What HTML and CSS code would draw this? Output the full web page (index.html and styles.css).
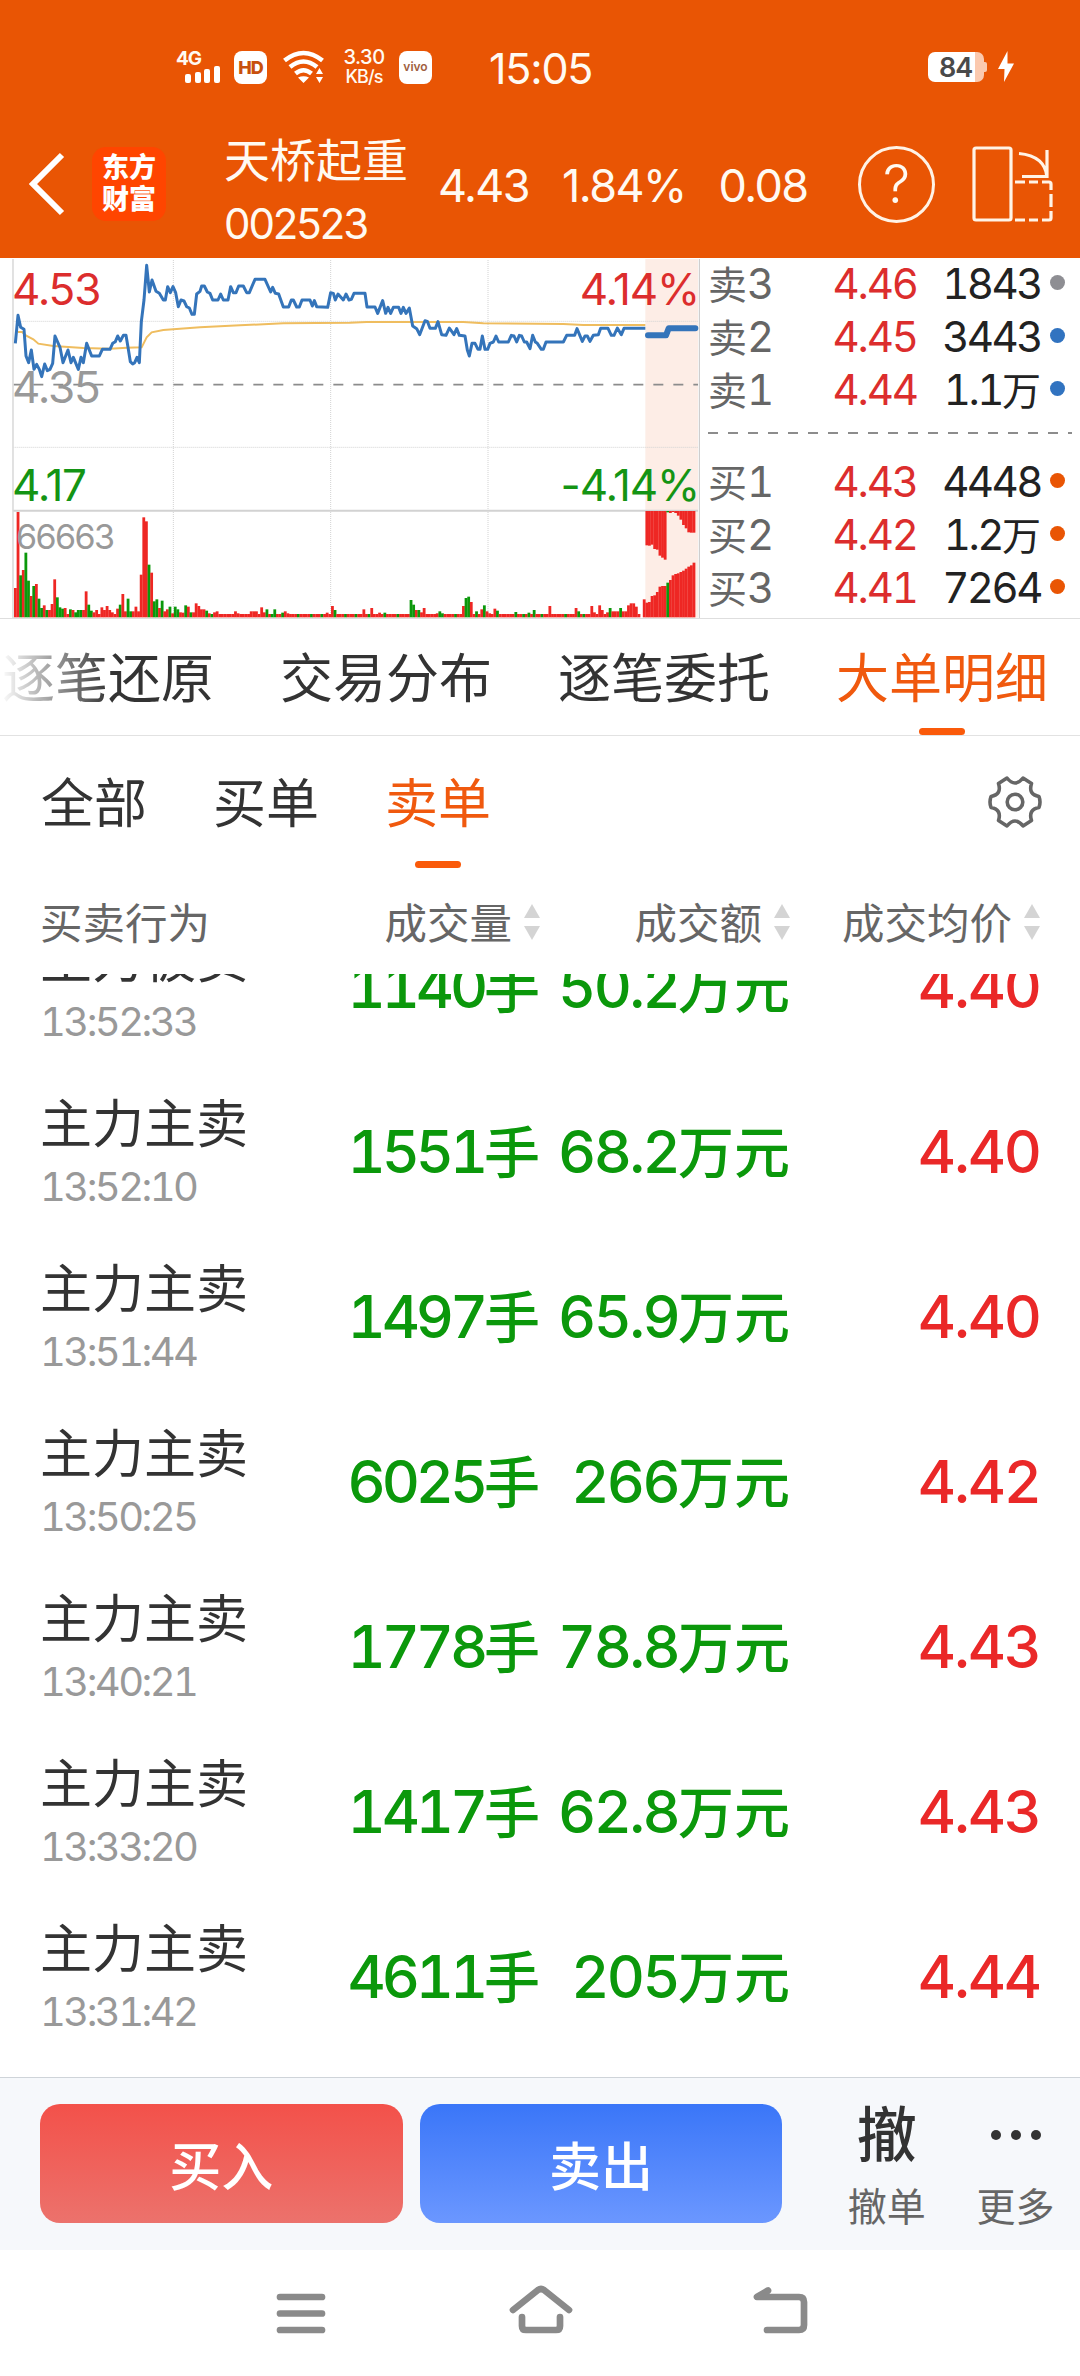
FILE: index.html
```html
<!DOCTYPE html>
<html lang="zh-CN">
<head>
	<meta charset="utf-8">
	<title>天桥起重 002523</title>
	<link rel="stylesheet" href="styles.css">
</head>
<body>
	<div class="top">
		<div class="status">
			<div class="signal">
				<b>4G</b>
				<svg width="36" height="17" fill="#fff"><rect x="0" y="8" width="6" height="9" rx="2"/><rect x="10" y="6" width="6" height="11" rx="2"/><rect x="19" y="3" width="6" height="14" rx="2"/><rect x="29" y="0" width="6" height="17" rx="2"/></svg>
			</div>
			<div class="badge hd">HD</div>
			<svg class="wifi" width="42" height="34" viewBox="0 0 42 34" fill="none" stroke="#fff" stroke-width="4.6">
				<path d="M1.5 10.5Q20.5 -4.500 39.500 10.500M7 17Q20.500 6 34 17M12.500 23.500Q20.500 17 28.500 23.500"/>
				<path d="M15 27.500Q20.500 25 26 27.500L20.500 33ZM33 24l3.500-6 3.500 6zM33 27l3.500 6 3.500-6z" fill="#fff" stroke="none"/>
			</svg>
			<div class="speed"><span>3.30</span><span>KB/s</span></div>
			<div class="badge vivo">vivo</div>
			<div class="clock">15:05</div>
			<div class="battery"><span>84</span></div>
			<svg class="bolt" width="16" height="32" viewBox="0 0 16 32"><path d="M9.500 0L0 18h6.500L6 31 16 12.500H9.500z" fill="#fff"/></svg>
		</div>
		<div class="appbar">
			<svg class="back" width="36" height="64" viewBox="0 0 36 64" fill="none" stroke="#fff" stroke-width="6"><path d="M33 3L4 32l29 29"/></svg>
			<div class="logo"><span>东方</span><span>财富</span></div>
			<div class="stock"><div class="stock-name">天桥起重</div><div class="stock-code">002523</div></div>
			<div class="quote"><span>4.43</span><span>1.84%</span><span>0.08</span></div>
			<div class="help">?</div>
			<svg class="rotate" width="82" height="76" viewBox="0 0 82 76" fill="none" stroke="#fff3e6" stroke-width="3.200">
				<rect x="2" y="2" width="37" height="72" rx="2"/>
				<path d="M47 7.500Q73 10 75 31M75 4v26.500H50"/>
				<path d="M43 36h10M57 36h9M70 36h7q2 0 2 2v6M79 48v13M79 65v7q0 2-2 2h-7M66 74h-9M53 74H43"/>
			</svg>
		</div>
	</div>

	<div class="market">
		<div class="chart">
			<!-- 3 units per pixel -->
			<svg width="700" height="360" viewBox="0 24 2100 1080">
				<rect x="1936" y="27" width="158" height="1076" fill="#fdede6"/>
				<g stroke="#d2d2d2" stroke-width="3" stroke-dasharray="3 3">
					<path d="M520 30V1102M992 30V1102M1464 30V1102M40 214H2094M40 592H2094"/>
				</g>
				<path d="M40 404H2094" stroke="#8c8c8c" stroke-width="5" stroke-dasharray="30 30"/>
				<path d="M39 27V1104" stroke="#dcdcdc" stroke-width="5"/>
				<path d="M2098 27V1104" stroke="#c4c4c4" stroke-width="3"/>
				<path d="M40 782H2094" stroke="#d2d2d2" stroke-width="6"/>
				<g id="bars"></g>
				<polyline fill="none" stroke="#efbd5f" stroke-width="6" points="54,246 66,246 80,258 100,268 115,281 160,288 250,294 330,296 380,293 425,292 440,262 455,247 490,240 600,232 720,226 850,220 1050,218 1100,216 1390,216 1450,220 1690,222 1750,225 1936,225"/>
				<polyline fill="none" stroke="#3474ba" stroke-width="9" stroke-linejoin="round" points="46,280 54,196 62,232 72,238 78,318 86,338 94,300 102,358 110,343 118,358 125,380 134,342 142,362 150,358 158,340 165,258 180,292 189,338 204,300 213,338 220,322 235,358 243,322 250,338 260,280 275,318 298,318 307,298 330,298 338,280 346,275 353,258 361,273 370,256 378,256 385,298 391,335 398,342 404,338 411,322 418,338 424,215 432,150 440,46 448,126 456,90 468,124 478,130 490,150 496,150 503,110 511,128 519,110 527,128 535,170 543,150 552,153 560,170 568,174 576,193 583,193 590,132 600,124 605,108 613,108 622,126 630,130 638,150 654,150 662,132 670,150 684,150 692,110 700,128 708,128 716,108 730,108 740,128 748,128 765,88 795,88 812,126 818,112 826,130 836,132 850,171 866,171 874,150 880,150 890,171 898,171 906,150 930,150 937,168 943,152 950,170 983,172 992,128 1000,130 1006,150 1014,132 1030,150 1038,132 1047,150 1054,148 1062,130 1095,130 1101,171 1125,171 1133,190 1148,152 1157,190 1164,172 1172,190 1180,172 1196,172 1203,190 1210,172 1218,190 1228,174 1238,228 1250,236 1259,254 1275,212 1282,214 1290,235 1306,235 1314,215 1325,254 1338,256 1348,234 1362,254 1370,236 1378,256 1395,258 1402,300 1408,318 1416,280 1425,280 1434,298 1440,298 1447,258 1455,298 1463,298 1470,280 1480,276 1488,258 1496,276 1525,276 1534,256 1542,258 1550,276 1558,256 1565,258 1573,276 1580,276 1590,296 1598,256 1606,276 1612,280 1624,298 1630,298 1638,276 1690,276 1700,256 1724,256 1731,236 1747,274 1755,258 1762,258 1770,274 1780,256 1795,254 1802,235 1824,235 1834,256 1842,256 1852,234 1864,254 1872,235 1936,235"/>
				<polyline fill="none" stroke="#3474ba" stroke-width="18" stroke-linecap="round" stroke-linejoin="round" points="1944,256 1998,256 2006,235 2086,235"/>
			</svg>
			<span class="label up high">4.53</span>
			<span class="label up high right">4.14%</span>
			<span class="label mid">4.35</span>
			<span class="label down low">4.17</span>
			<span class="label down low right">-4.14%</span>
			<span class="label vol">66663</span>
		</div>
		<div class="book">
			<div class="level"><span>卖<i>3</i></span><b>4.46</b><em>1843</em><u class="grey"></u></div>
			<div class="level"><span>卖<i>2</i></span><b>4.45</b><em>3443</em><u class="blue"></u></div>
			<div class="level"><span>卖<i>1</i></span><b>4.44</b><em>1.1<small>万</small></em><u class="blue"></u></div>
			<svg class="split" width="364" height="39"><path d="M0 17H364" stroke="#8c8c8c" stroke-width="2" stroke-dasharray="10 10"/></svg>
			<div class="level"><span>买<i>1</i></span><b>4.43</b><em>4448</em><u></u></div>
			<div class="level"><span>买<i>2</i></span><b>4.42</b><em>1.2<small>万</small></em><u></u></div>
			<div class="level"><span>买<i>3</i></span><b>4.41</b><em>7264</em><u></u></div>
		</div>
	</div>

	<div class="tabs">
		<a>逐笔还原</a><a>交易分布</a><a>逐笔委托</a><a class="active">大单明细</a>
	</div>
	<div class="filters">
		<a>全部</a><a>买单</a><a class="active">卖单</a>
		<svg class="gear" width="56" height="54" viewBox="-28 -27 56 54" fill="none" stroke="#666" stroke-width="3.600" stroke-linejoin="round">
			<path d="M-8 -24Q0 -14 8 -24L16.500 -18.500Q13 -7.500 24 -5.500Q26 0 24 5.500Q13 7.500 16.500 18.500L8 24Q0 14 -8 24L-16.500 18.500Q-13 7.500 -24 5.500Q-26 0 -24 -5.500Q-13 -7.500 -16.500 -18.500Z"/>
			<circle r="7.800"/>
		</svg>
	</div>
	<div class="grid thead">
		<span>买卖行为</span>
		<span>成交量<i class="sort"></i></span>
		<span>成交额<i class="sort"></i></span>
		<span>成交均价<i class="sort"></i></span>
	</div>
	<div class="list">
		<div class="grid row"><div><p>主力被卖</p><time>13:52:33</time></div><span class="lots">1140<small>手</small></span><span>50.2<small>万元</small></span><b>4.40</b></div>
		<div class="grid row"><div><p>主力主卖</p><time>13:52:10</time></div><span class="lots">1551<small>手</small></span><span>68.2<small>万元</small></span><b>4.40</b></div>
		<div class="grid row"><div><p>主力主卖</p><time>13:51:44</time></div><span class="lots">1497<small>手</small></span><span>65.9<small>万元</small></span><b>4.40</b></div>
		<div class="grid row"><div><p>主力主卖</p><time>13:50:25</time></div><span class="lots">6025<small>手</small></span><span>266<small>万元</small></span><b>4.42</b></div>
		<div class="grid row"><div><p>主力主卖</p><time>13:40:21</time></div><span class="lots">1778<small>手</small></span><span>78.8<small>万元</small></span><b>4.43</b></div>
		<div class="grid row"><div><p>主力主卖</p><time>13:33:20</time></div><span class="lots">1417<small>手</small></span><span>62.8<small>万元</small></span><b>4.43</b></div>
		<div class="grid row"><div><p>主力主卖</p><time>13:31:42</time></div><span class="lots">4611<small>手</small></span><span>205<small>万元</small></span><b>4.44</b></div>
	</div>

	<div class="trade">
		<button class="buy">买入</button>
		<button class="sell">卖出</button>
		<div class="action"><strong>撤</strong><span>撤单</span></div>
		<div class="action">
			<svg width="60" height="64" fill="#333"><circle cx="10" cy="32" r="5"/><circle cx="30" cy="32" r="5"/><circle cx="50" cy="32" r="5"/></svg>
			<span>更多</span>
		</div>
	</div>
	<div class="nav">
		<svg width="60" height="60" viewBox="0 0 60 60"><path d="M9 14H51M9 30.500H51M9 47H51"/></svg>
		<svg width="70" height="60" viewBox="0 0 70 60"><path d="M7 27L32 7Q35 5 38 7L63 27M16 34V43Q16 47 20 47H50Q54 47 54 43V34"/></svg>
		<svg width="60" height="60" viewBox="0 0 60 60"><path d="M17 7.500L6 14H48Q53 14 53 19V42Q53 47 48 47H16"/></svg>
	</div>

	<script>
		// volume per minute, negative = falling (green)
		var vol = [88,316,-126,142,-194,-110,64,-94,100,-56,-28,36,-22,22,40,114,-60,-30,-26,28,10,-24,22,-15,-22,-22,22,78,-38,-20,15,22,10,30,22,34,22,15,10,26,-38,70,18,-56,-18,18,32,18,128,300,288,-158,134,-48,-54,28,-50,18,24,-32,12,-32,-24,15,14,-36,32,-15,15,42,34,24,24,-20,12,-10,15,18];
		// the rest of the day is flat apart from these minutes
		var peaks = {84:18,85:12,90:18,91:18,92:18,94:30,95:15,96:-24,98:-10,99:-24,102:-14,103:18,104:12,108:-10,113:-10,117:-10,119:14,121:34,122:-22,126:-10,130:-10,133:24,135:-10,136:28,139:14,141:-14,146:-10,151:-52,152:-38,153:22,154:-22,155:15,156:28,161:12,162:-18,163:-12,168:-10,171:34,172:-58,173:-62,174:46,176:-18,178:24,179:-36,180:18,181:12,183:26,184:-20,191:-16,194:-10,196:-14,198:-22,201:-10,204:34,210:-10,214:28,215:-18,217:-10,220:34,221:15,223:36,224:22,226:15,227:-28,228:18,229:18,230:18,231:-28,232:18,233:18,234:36,235:42,236:42,237:32,
			240:54,241:44,242:46,243:64,244:66,245:76,246:92,247:94,248:94,249:-104,250:112,251:126,252:130,253:132,254:136,255:140,256:146,257:152,258:156,259:164};
		var queue = [103,104,101,114,116,134,140,146,-4,6,3,6,14,26,42,52,64,65,65];
		var out = "";

		function bar(i, v, top) {
			var h = Math.abs(v);
			var y = top ? 783 : 1102 - h;
			out += '<rect x="' + (42 + i * 7.86).toFixed(1) + '" y="' + y + '" width="8.4" height="' + h + '" fill="' + (v < 0 ? "#0b980b" : "#ee2724") + '"/>';
		}
		for (var i = 0; i < 260; i++) {
			if (i == 239) continue;
			bar(i, vol[i] || peaks[i] || 10);
		}
		for (var j = 0; j < queue.length; j++) {
			bar(241 + j, queue[j], true);
		}
		document.getElementById("bars").innerHTML = out;
	</script>
</body>
</html>
```
FILE: styles.css
```css
* {
	box-sizing: border-box;
}
body {
	margin: 0;
	width: 1080px;
	height: 2376px;
	overflow: hidden;
	display: flex;
	flex-direction: column;
	background: #fff;
	color: #333;
	font-family: Inter, "Noto Sans CJK SC", sans-serif;
	line-height: 1;
}
i, em, u {
	font-style: normal;
	text-decoration: none;
}

/* status bar and title */
.top {
	height: 258px;
	background: #e95504;
	color: #fffaf2;
}
.status {
	height: 110px;
	padding: 24px 0 0 176px;
	display: flex;
	align-items: center;
}
.signal {
	width: 58px;
	height: 32px;
	display: flex;
	flex-direction: column;
}
.signal b {
	font-size: 19px;
	line-height: 15px;
	letter-spacing: -1px;
}
.signal svg {
	margin-left: 9px;
}
.badge {
	width: 33px;
	height: 33px;
	border-radius: 8px;
	background: #fff;
	color: #c8500c;
	text-align: center;
	line-height: 33px;
	font-weight: 800;
}
.hd {
	font-size: 18px;
	letter-spacing: -1px;
	margin-right: 16px;
}
.speed {
	width: 44px;
	margin: 0 13px 0 17px;
	display: flex;
	flex-direction: column;
	align-items: center;
	font-size: 20px;
	line-height: 20px;
	font-weight: 500;
	letter-spacing: -0.5px;
}
.speed span + span {
	font-size: 18px;
	letter-spacing: -0.9px;
}
.vivo {
	font-size: 12px;
	font-weight: 600;
	line-height: 31px;
	color: #a06040;
}
.clock {
	width: 120px;
	margin: 2px 0 0 57px;
	font-size: 43px;
	letter-spacing: -1.2px;
}
.battery {
	position: relative;
	width: 56px;
	height: 30px;
	margin: 0 14px 0 319px;
	border-radius: 7px;
	background: linear-gradient(90deg, #fff 47px, #fbc9ae 47px);
	color: #4a4a4a;
	font-size: 27px;
	line-height: 31px;
	font-weight: 600;
	letter-spacing: -1px;
	padding-left: 11px;
}
.battery::after {
	content: "";
	position: absolute;
	right: -3px;
	top: 10px;
	width: 3px;
	height: 10px;
	border-radius: 0 2px 2px 0;
	background: #fbc9ae;
}
.appbar {
	height: 148px;
	padding-left: 29px;
	display: flex;
	align-items: center;
}
.logo {
	width: 74px;
	height: 74px;
	margin-left: 27px;
	border-radius: 14px;
	background: #ff4500;
	color: #fff;
	display: flex;
	flex-direction: column;
	align-items: center;
	justify-content: center;
	font-size: 27px;
	line-height: 32px;
	font-weight: 900;
}
.stock {
	width: 214px;
	margin-left: 58px;
	padding-top: 16px;
}
.stock-name {
	font-size: 46px;
	line-height: 64px;
}
.stock-code {
	font-size: 42px;
	line-height: 64px;
	letter-spacing: -0.05em;
}
.quote {
	display: flex;
	width: 420px;
	gap: 33px;
	padding-top: 3px;
	font-size: 45px;
	letter-spacing: -0.035em;
}
.help {
	width: 77px;
	height: 77px;
	border: 3.5px solid #fff3e6;
	border-radius: 50%;
	text-align: center;
	font-size: 54px;
	line-height: 70px;
	font-weight: 300;
}
.rotate {
	margin-left: 37px;
}

/* chart and order book */
.market {
	display: flex;
	height: 361px;
	border-bottom: 1px solid #dedede;
}
.chart {
	position: relative;
	width: 708px;
	height: 360px;
}
.chart svg {
	display: block;
}
.label {
	position: absolute;
	left: 12px;
	font-size: 44px;
	letter-spacing: -1.2px;
}
.right {
	left: auto;
	right: 9px;
}
.high {
	top: 9px;
}
.mid {
	top: 107px;
	color: #999;
}
.low {
	top: 205px;
}
.up {
	color: #dc2d2d;
}
.down {
	color: #149414;
}
.vol {
	top: 262px;
	left: 16px;
	font-size: 34px;
	letter-spacing: -1.6px;
	color: #999;
}
.book {
	margin-top: -1px;
}
.level {
	display: flex;
	align-items: center;
	height: 53px;
	font-size: 42px;
	letter-spacing: -0.05em;
	font-variant-numeric: tabular-nums;
}
.level span {
	width: 80px;
	color: #666;
	font-size: 39px;
	letter-spacing: 0;
}
.level i {
	font-size: 42px;
}
.level b {
	width: 129px;
	font-weight: 400;
	color: #dc2d2d;
	text-align: right;
}
.level em {
	width: 124px;
	color: #222;
	letter-spacing: -0.06em;
	text-align: right;
}
.level small {
	font-size: 39px;
	letter-spacing: 0;
}
.level u {
	width: 15px;
	height: 15px;
	margin-left: 9px;
	margin-top: -3px;
	border-radius: 50%;
	background: #e95504;
}
.level .grey {
	background: #8e8e93;
}
.level .blue {
	background: #3173c0;
}
.split {
	display: block;
}

/* tabs */
.tabs {
	position: relative;
	display: flex;
	gap: 66px;
	height: 117px;
	padding-left: 2px;
	border-bottom: 1px solid #e2e2e2;
}
.tabs::before {
	content: "";
	position: absolute;
	left: 0;
	top: 0;
	z-index: 1;
	width: 110px;
	height: 110px;
	background: linear-gradient(90deg, #fff, rgba(255, 255, 255, 0));
}
.tabs a, .filters a {
	position: relative;
	font-size: 53px;
	line-height: 121px;
	height: 116px;
	white-space: nowrap;
}
.active {
	color: #f0590e;
}
.active::after {
	content: "";
	position: absolute;
	left: 50%;
	bottom: 0;
	width: 46px;
	height: 7px;
	margin-left: -23px;
	border-radius: 4px;
	background: #fa5a0a;
}
.filters {
	display: flex;
	gap: 66px;
	height: 133px;
	padding-left: 41px;
}
.filters a {
	height: 132px;
	line-height: 137px;
}
.gear {
	margin: 39px 37px 0 auto;
}

/* big order table */
.grid {
	display: grid;
	grid-template-columns: repeat(4, 250px);
	padding-left: 40px;
	align-items: center;
}
.thead {
	height: 105px;
	padding-top: 5px;
	font-size: 42.5px;
	color: #666;
}
.thead span {
	display: flex;
	justify-content: flex-end;
	white-space: nowrap;
}
.thead span:first-child {
	justify-content: flex-start;
}
.sort {
	display: flex;
	flex-direction: column;
	justify-content: space-between;
	height: 36px;
	margin: 1px 0 0 12px;
}
.sort::before, .sort::after {
	content: "";
	border: 8px solid transparent;
	border-top-width: 0;
	border-bottom: 14px solid #d4d4d4;
}
.sort::after {
	border-top: 14px solid #d4d4d4;
	border-bottom-width: 0;
}
.list {
	height: 1103px;
	overflow: hidden;
}
.row {
	height: 165px;
	font-variant-numeric: tabular-nums;
}
.row:first-child {
	margin-top: -70px;
}
.row p {
	margin: 6px 0 0;
	font-size: 52px;
	line-height: 64px;
}
.row time {
	display: block;
	font-size: 40px;
	line-height: 60px;
	letter-spacing: -2.6px;
	color: #999;
}
.row span, .row b {
	font-size: 59px;
	font-weight: 500;
	letter-spacing: -0.045em;
	text-align: right;
	white-space: nowrap;
	color: #0b980b;
}
.row .lots {
	letter-spacing: -0.07em;
}
.row b {
	color: #ea2828;
	letter-spacing: -0.035em;
}
.row small {
	font-size: 56px;
	letter-spacing: 0;
}

/* bottom */
.trade {
	display: flex;
	align-items: center;
	height: 173px;
	padding: 0 0 2px 40px;
	border-top: 1px solid #cfd4d9;
	background: #f6f8fb;
}
.trade button {
	width: 363px;
	height: 119px;
	margin-right: 17px;
	border: none;
	border-radius: 20px;
	color: #fff;
	font-family: inherit;
	font-size: 52px;
	font-weight: 500;
}
.buy {
	background: linear-gradient(#f3514a, #ec726c);
}
.sell {
	background: linear-gradient(#3a76f8, #6b97ff);
}
.action {
	display: flex;
	flex-direction: column;
	align-items: center;
	width: 129px;
	padding-top: 11px;
	font-size: 39px;
	color: #666;
}
.action strong {
	font-size: 60px;
	line-height: 64px;
	font-weight: 500;
	color: #333;
}
.action span {
	line-height: 56px;
	padding-top: 12px;
}
.trade .sell {
	margin-right: 40px;
}
.nav {
	display: flex;
	justify-content: center;
	gap: 175px;
	height: 126px;
	padding: 33px 0 0 1px;
}
.nav path {
	fill: none;
	stroke: #8a8a8a;
	stroke-width: 6.7;
	stroke-linecap: round;
	stroke-linejoin: round;
}
```
